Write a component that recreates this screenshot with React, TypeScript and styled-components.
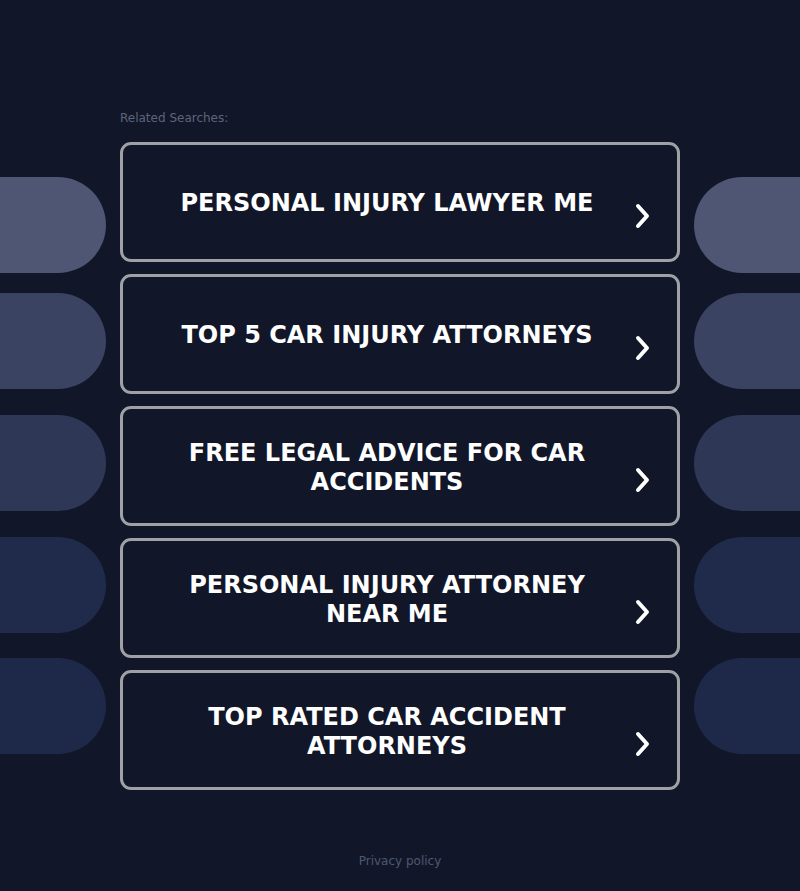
import React from "react";
import styled, { createGlobalStyle } from "styled-components";

const Global = createGlobalStyle`
  html, body { margin: 0; padding: 0; background: #111729; }
  body { font-family: "DejaVu Sans", "Liberation Sans", sans-serif; }
`;

const Page = styled.div`
  width: 800px;
  height: 891px;
  display: grid;
  grid-template-columns: 106px 14px 560px 14px 106px;
  overflow: hidden;
  background: #111729;
`;

const PillColumn = styled.div<{ $side: "left" | "right" }>`
  grid-column: ${(p) => (p.$side === "left" ? "1" : "5")};
  display: flex;
  flex-direction: column;
  padding-top: 177px;
`;

const Pill = styled.div<{ $side: "left" | "right"; $color: string; $gap: number }>`
  height: 96px;
  margin-top: ${(p) => p.$gap}px;
  background: ${(p) => p.$color};
  border-radius: ${(p) => (p.$side === "left" ? "0 48px 48px 0" : "48px 0 0 48px")};
`;

const Center = styled.main`
  grid-column: 3;
  display: flex;
  flex-direction: column;
`;

const Heading = styled.div`
  margin-top: 111px;
  height: 14px;
  font-size: 12px;
  line-height: 14px;
  color: #5d6479;
  margin-bottom: 17px;
`;

const List = styled.div`
  display: flex;
  flex-direction: column;
  gap: 12px;
`;

const Card = styled.a`
  box-sizing: border-box;
  height: 120px;
  border: 3px solid #9fa1a6;
  border-radius: 11px;
  display: flex;
  align-items: center;
  padding: 0 22px 0 20px;
  text-decoration: none;
  background: #111729;
`;

const Label = styled.span`
  flex: 1;
  text-align: center;
  color: #ffffff;
  font-weight: bold;
  font-size: 24px;
  line-height: 29px;
  padding: 3px 13px 0 15px;
`;

const Arrow = styled.svg`
  width: 26px;
  height: 26px;
  margin-top: 28px;
  flex: none;
`;

const Footer = styled.div`
  margin-top: 64px;
  text-align: center;
  font-size: 12px;
  line-height: 14px;
  color: #4f5870;
`;

const items = [
  "PERSONAL INJURY LAWYER ME",
  "TOP 5 CAR INJURY ATTORNEYS",
  "FREE LEGAL ADVICE FOR CAR ACCIDENTS",
  "PERSONAL INJURY ATTORNEY NEAR ME",
  "TOP RATED CAR ACCIDENT ATTORNEYS",
];

const pills = [
  { color: "#4e5674", gap: 0 },
  { color: "#3a4462", gap: 20 },
  { color: "#2e3856", gap: 26 },
  { color: "#202b4b", gap: 26 },
  { color: "#1e294a", gap: 25 },
];

export default function App() {
  return (
    <>
      <Global />
      <Page>
        <PillColumn $side="left">
          {pills.map((p, i) => (
            <Pill key={i} $side="left" $color={p.color} $gap={p.gap} />
          ))}
        </PillColumn>
        <Center>
          <Heading>Related Searches:</Heading>
          <List>
            {items.map((t) => (
              <Card key={t} href="#">
                <Label>{t}</Label>
                <Arrow viewBox="0 0 26 26">
                  <path
                    d="M9 3 L18 13 L9 23"
                    fill="none"
                    stroke="#ffffff"
                    strokeWidth="4"
                    strokeLinecap="round"
                    strokeLinejoin="round"
                  />
                </Arrow>
              </Card>
            ))}
          </List>
          <Footer>Privacy policy</Footer>
        </Center>
        <PillColumn $side="right">
          {pills.map((p, i) => (
            <Pill key={i} $side="right" $color={p.color} $gap={p.gap} />
          ))}
        </PillColumn>
      </Page>
    </>
  );
}
